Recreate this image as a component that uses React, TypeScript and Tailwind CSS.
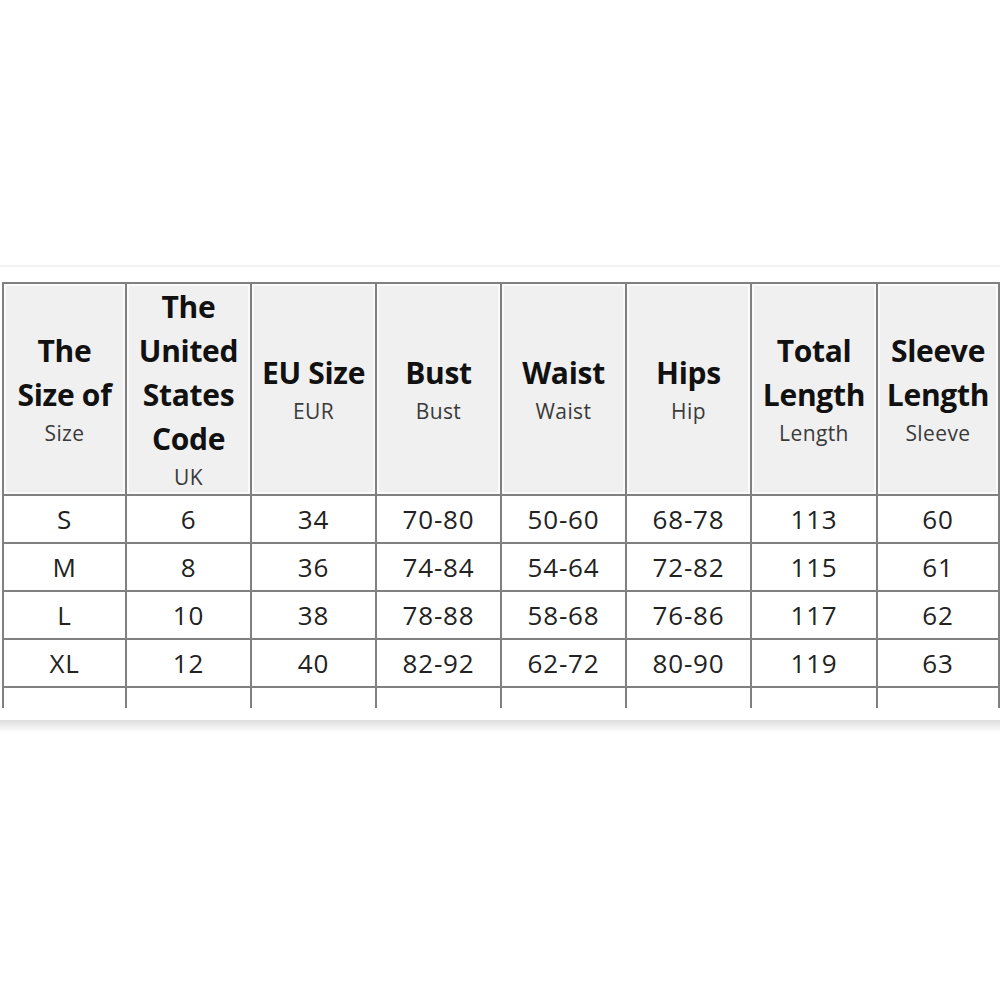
import React from "react";

type Head = { main: string[]; sub: string };

const heads: Head[] = [
  { main: ["The", "Size of"], sub: "Size" },
  { main: ["The", "United", "States", "Code"], sub: "UK" },
  { main: ["EU Size"], sub: "EUR" },
  { main: ["Bust"], sub: "Bust" },
  { main: ["Waist"], sub: "Waist" },
  { main: ["Hips"], sub: "Hip" },
  { main: ["Total", "Length"], sub: "Length" },
  { main: ["Sleeve", "Length"], sub: "Sleeve" },
];

const rows = [
  ["S", "6", "34", "70-80", "50-60", "68-78", "113", "60"],
  ["M", "8", "36", "74-84", "54-64", "72-82", "115", "61"],
  ["L", "10", "38", "78-88", "58-68", "76-86", "117", "62"],
  ["XL", "12", "40", "82-92", "62-72", "80-90", "119", "63"],
];

const font = { fontFamily: '"Open Sans", "Noto Sans", sans-serif' };

export default function App() {
  return (
    <div className="w-[1000px] h-[1000px] bg-white overflow-hidden" style={font}>
      <div className="h-[265px]" />
      <div className="h-[2px] bg-[#f3f3f3]" />
      <div className="h-[15px]" />

      <div className="ml-[2px] h-[426px] overflow-hidden">
        <div className="grid grid-cols-[123px_125px_125px_125px_125px_125px_126px_122px] w-max border-l-2 border-t-2 border-[#808080]">
          {heads.map((h, i) => (
            <div
              key={i}
              className="h-[212px] border-r-2 border-b-2 border-[#808080] bg-[#f0f0f0] shadow-[inset_0_0_0_2px_#fafafa] flex flex-col items-center justify-center text-center"
            >
              {h.main.map((m) => (
                <div key={m} className="text-[30px] leading-[44px] font-bold text-[#111] whitespace-nowrap tracking-[-0.3px]">
                  {m}
                </div>
              ))}
              <div className="text-[21px] leading-[32px] text-[#3a3a3a] tracking-[0.4px]">{h.sub}</div>
            </div>
          ))}
          {rows.map((r, ri) =>
            r.map((c, ci) => (
              <div
                key={ri + "-" + ci}
                className="h-[48px] border-r-2 border-b-2 border-[#808080] flex items-center justify-center text-[26px] text-[#222] tracking-[0.8px]"
              >
                {c}
              </div>
            ))
          )}
          {heads.map((_, i) => (
            <div key={"e" + i} className="h-[30px] border-r-2 border-[#808080]" />
          ))}
        </div>
      </div>

      <div className="h-[12px]" />
      <div className="h-[12px] bg-gradient-to-b from-[#dcdcdc] to-white" />
    </div>
  );
}
